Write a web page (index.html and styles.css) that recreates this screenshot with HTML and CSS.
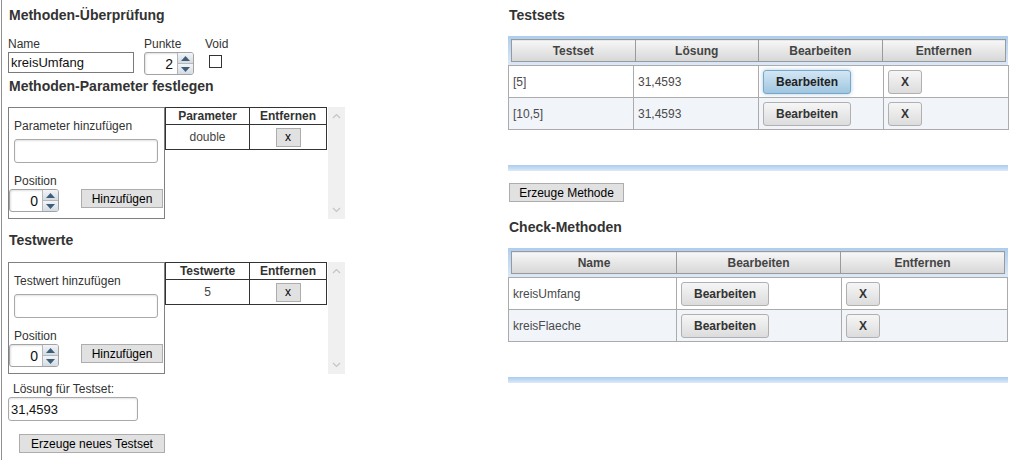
FILE: index.html
```html
<!DOCTYPE html>
<html lang="de">
<head>
<meta charset="utf-8">
<title>Methoden-Überprüfung</title>
<link rel="stylesheet" href="styles.css">
</head>
<body>
<div class="page">
  <div class="left">
    <h2 class="title">Methoden-Überprüfung</h2>
    <div class="meta">
      <div class="fld f-name">
        <label class="lbl">Name</label>
        <input class="txt name-in" type="text" value="kreisUmfang">
      </div>
      <div class="fld f-punkte">
        <label class="lbl">Punkte</label>
        <div class="spin"><span class="spin-val">2</span><span class="spin-btns"><span class="sb sb-up"><svg width="9" height="5" viewBox="0 0 9 5"><path d="M0 5 L4.5 0 L9 5Z" fill="#3d5d78"/></svg></span><span class="sb sb-dn"><svg width="9" height="5" viewBox="0 0 9 5"><path d="M0 0 L4.5 5 L9 0Z" fill="#3d5d78"/></svg></span></span></div>
      </div>
      <div class="fld f-void">
        <label class="lbl">Void</label>
        <span class="chk"></span>
      </div>
    </div>

    <h2 class="title t-sub">Methoden-Parameter festlegen</h2>
    <div class="editor">
      <div class="ebox">
        <div class="lbl elbl">Parameter hinzufügen</div>
        <input class="txt einput" type="text" value="">
        <div class="lbl elbl2">Position</div>
        <div class="erow">
          <div class="spin spin-sm"><span class="spin-val">0</span><span class="spin-btns"><span class="sb sb-up"><svg width="9" height="5" viewBox="0 0 9 5"><path d="M0 5 L4.5 0 L9 5Z" fill="#3d5d78"/></svg></span><span class="sb sb-dn"><svg width="9" height="5" viewBox="0 0 9 5"><path d="M0 0 L4.5 5 L9 0Z" fill="#3d5d78"/></svg></span></span></div>
          <button class="btn btn-add">Hinzufügen</button>
        </div>
      </div>
      <div class="etable">
        <table class="ptable">
          <tr><th class="c1">Parameter</th><th class="c2">Entfernen</th></tr>
          <tr><td>double</td><td><button class="btn btn-x">x</button></td></tr>
        </table>
        <div class="vscroll">
          <svg width="9" height="6" viewBox="0 0 9 6"><path d="M1 5 L4.5 1.5 L8 5" fill="none" stroke="#c4c4c4" stroke-width="1.2"/></svg>
          <svg width="9" height="6" viewBox="0 0 9 6"><path d="M1 1 L4.5 4.5 L8 1" fill="none" stroke="#c4c4c4" stroke-width="1.2"/></svg>
        </div>
      </div>
    </div>

    <h2 class="title t-sub2">Testwerte</h2>
    <div class="editor editor2">
      <div class="ebox">
        <div class="lbl elbl">Testwert hinzufügen</div>
        <input class="txt einput" type="text" value="">
        <div class="lbl elbl2">Position</div>
        <div class="erow">
          <div class="spin spin-sm"><span class="spin-val">0</span><span class="spin-btns"><span class="sb sb-up"><svg width="9" height="5" viewBox="0 0 9 5"><path d="M0 5 L4.5 0 L9 5Z" fill="#3d5d78"/></svg></span><span class="sb sb-dn"><svg width="9" height="5" viewBox="0 0 9 5"><path d="M0 0 L4.5 5 L9 0Z" fill="#3d5d78"/></svg></span></span></div>
          <button class="btn btn-add">Hinzufügen</button>
        </div>
      </div>
      <div class="etable">
        <table class="ptable">
          <tr><th class="c1">Testwerte</th><th class="c2">Entfernen</th></tr>
          <tr><td>5</td><td><button class="btn btn-x">x</button></td></tr>
        </table>
        <div class="vscroll">
          <svg width="9" height="6" viewBox="0 0 9 6"><path d="M1 5 L4.5 1.5 L8 5" fill="none" stroke="#c4c4c4" stroke-width="1.2"/></svg>
          <svg width="9" height="6" viewBox="0 0 9 6"><path d="M1 1 L4.5 4.5 L8 1" fill="none" stroke="#c4c4c4" stroke-width="1.2"/></svg>
        </div>
      </div>
    </div>

    <div class="lbl loes-lbl">Lösung für Testset:</div>
    <input class="txt loes-in" type="text" value="31,4593">
    <button class="btn btn-new">Erzeuge neues Testset</button>
  </div>

  <div class="right">
    <h2 class="title">Testsets</h2>
    <div class="dt">
      <div class="dt-head">
        <table class="hd">
          <tr><th class="w4">Testset</th><th class="w4">Lösung</th><th class="w4">Bearbeiten</th><th class="w4">Entfernen</th></tr>
        </table>
      </div>
      <div class="dt-body">
        <table class="bd">
          <tr class="odd"><td class="w4">[5]</td><td class="w4">31,4593</td><td class="w4"><button class="ubtn ubtn-b active">Bearbeiten</button></td><td class="w4"><button class="ubtn ubtn-x">X</button></td></tr>
          <tr class="even"><td>[10,5]</td><td>31,4593</td><td><button class="ubtn ubtn-b">Bearbeiten</button></td><td><button class="ubtn ubtn-x">X</button></td></tr>
        </table>
      </div>
      <div class="dt-foot"></div>
    </div>
    <button class="btn btn-gen">Erzeuge Methode</button>

    <h2 class="title t-check">Check-Methoden</h2>
    <div class="dt">
      <div class="dt-head">
        <table class="hd">
          <tr><th class="k1">Name</th><th class="k2">Bearbeiten</th><th>Entfernen</th></tr>
        </table>
      </div>
      <div class="dt-body">
        <table class="bd">
          <tr class="odd"><td class="k1b">kreisUmfang</td><td class="k2b"><button class="ubtn ubtn-b">Bearbeiten</button></td><td><button class="ubtn ubtn-x">X</button></td></tr>
          <tr class="even"><td>kreisFlaeche</td><td><button class="ubtn ubtn-b">Bearbeiten</button></td><td><button class="ubtn ubtn-x">X</button></td></tr>
        </table>
      </div>
      <div class="dt-foot"></div>
    </div>
  </div>
</div>
</body>
</html>
```
FILE: styles.css
```css
* { box-sizing: border-box; }
html, body { margin: 0; padding: 0; background: #fff; }
body {
  font-family: "Liberation Sans", Arial, sans-serif;
  font-size: 12px;
  color: #333;
}
.page { display: flex; height: 460px; }

.left {
  width: 507px;
  margin-left: 1px;
  border-left: 1px solid #8f8f8f;
  padding-left: 6px;
  display: flex;
  flex-direction: column;
  align-items: flex-start;
}
.right {
  width: 500px;
  display: flex;
  flex-direction: column;
  align-items: flex-start;
}

.title {
  margin: 7px 0 0 1px;
  font-size: 14px;
  line-height: 16px;
  font-weight: bold;
  color: #333;
}
.t-sub { margin-top: 3px; }
.t-sub2 { margin-top: 13px; }
.t-check { margin-top: 17px; }

.lbl { display: block; font-size: 12px; line-height: 14px; color: #333; }

.meta { display: flex; margin-top: 14px; height: 38px; }
.fld { display: flex; flex-direction: column; }
.fld .lbl { height: 15px; }
.f-punkte { margin-left: 10px; }
.f-void { margin-left: 10px; }
.f-void .lbl { margin-left: 1px; }

.txt {
  font-family: "Liberation Sans", Arial, sans-serif;
  font-size: 13px;
  color: #111;
  margin: 0;
  outline: none;
  background: #fff;
}
.name-in {
  width: 126px;
  height: 21px;
  border: 1px solid #7a7a7a;
  padding: 0 2px;
}
.chk {
  display: block;
  width: 13px;
  height: 13px;
  border: 1px solid #333;
  background: #fff;
  margin: 3px 0 0 5px;
}

.spin {
  display: flex;
  width: 50px;
  height: 23px;
  border: 1px solid #a3a3a3;
  border-radius: 3px;
  background: #fff;
  box-shadow: inset 1px 1px 2px rgba(0,0,0,0.12);
  overflow: hidden;
}
.spin-val {
  flex: 1;
  text-align: right;
  padding-right: 4px;
  font-size: 14px;
  line-height: 22px;
  color: #111;
}
.spin-btns {
  width: 16px;
  display: flex;
  flex-direction: column;
  border-left: 1px solid #b7b7b7;
}
.sb {
  flex: 1;
  display: flex;
  align-items: center;
  justify-content: center;
  background: linear-gradient(#f2f5f8, #d3dbe3);
}
.sb-dn { border-top: 1px solid #b7b7b7; }

.editor { display: flex; margin-top: 13px; height: 112px; }
.editor2 { margin-top: 14px; }
.ebox {
  width: 157px;
  height: 112px;
  border: 1px solid #808080;
  padding: 11px 0 0 5px;
}
.einput {
  display: block;
  width: 144px;
  height: 24px;
  margin-top: 6px;
  border: 1px solid #a9a9a9;
  border-radius: 3px;
  box-shadow: inset 0 1px 2px rgba(0,0,0,0.12);
}
.elbl2 { margin-top: 11px; }
.erow { display: flex; align-items: flex-start; margin-top: 1px; margin-left: -5px; }
.erow .btn-add { margin-left: 22px; }

.btn {
  font-family: "Liberation Sans", Arial, sans-serif;
  font-size: 12px;
  color: #000;
  background: #e1e1e1;
  border: 1px solid #adadad;
  padding: 0;
  margin: 0;
  line-height: 16px;
}
.btn-add { width: 82px; height: 19px; }
.btn-x { width: 25px; height: 19px; font-size: 12px; }

.etable { display: flex; width: 180px; height: 112px; }
.ptable {
  width: 163px;
  border-collapse: collapse;
  border: 1px solid #333;
  align-self: flex-start;
}
.ptable th {
  font-size: 12px;
  font-weight: bold;
  color: #333;
  height: 17px;
  line-height: 14px;
  padding: 0;
  border: 1px solid #333;
}
.ptable th.c1 { width: 84px; }
.ptable td {
  text-align: center;
  height: 25px;
  padding: 0;
  border: 1px solid #333;
  color: #444;
  vertical-align: middle;
}
.vscroll {
  width: 17px;
  margin-left: 1px;
  height: 112px;
  background: #f0f0f0;
  display: flex;
  flex-direction: column;
  justify-content: space-between;
  align-items: center;
  padding: 6px 0 6px;
}

.loes-lbl { margin: 8px 0 0 5px; }
.loes-in {
  display: block;
  width: 130px;
  height: 24px;
  margin-top: 1px;
  border: 1px solid #a9a9a9;
  border-radius: 3px;
  padding: 0 2px;
  box-shadow: inset 0 1px 2px rgba(0,0,0,0.12);
}
.btn-new { margin: 13px 0 0 11px; width: 146px; height: 19px; }

/* data tables */
.dt { width: 500px; margin-top: 13px; }
.dt-head {
  height: 29px;
  padding: 3px 3px 0 3px;
  background: linear-gradient(#aecdee, #dbe8f7);
}
.hd {
  width: 494px;
  border-collapse: collapse;
  table-layout: fixed;
}
.hd th {
  height: 22px;
  padding: 0;
  border: 1px solid #9a9a9a;
  background: linear-gradient(#f7f7f7, #d6d6d6);
  font-size: 12px;
  font-weight: bold;
  color: #444;
  text-align: center;
}
.hd th.w4 { width: 123.5px; }
.hd th.k1 { width: 165px; }
.hd th.k2 { width: 164px; }

.dt-body { height: 100px; }
.bd {
  width: 500px;
  border-collapse: collapse;
  table-layout: fixed;
}
.bd td {
  border: 1px solid #ababab;
  padding: 4px 4px 3px 4px;
  height: 32px;
  font-size: 12px;
  color: #4a4a4a;
  vertical-align: middle;
}
.bd td.w4 { width: 125px; }
.bd td.k1b { width: 168px; }
.bd td.k2b { width: 165px; }
.bd tr.odd { background: #fff; }
.bd tr.even { background: #f1f5fa; }

.ubtn {
  font-family: "Liberation Sans", Arial, sans-serif;
  font-size: 12px;
  font-weight: bold;
  color: #333;
  height: 24px;
  padding: 0;
  border: 1px solid #b0b0b0;
  border-radius: 3px;
  background: linear-gradient(#f6f6f6, #dcdcdc);
  display: block;
}
.ubtn-b { width: 88px; }
.ubtn-x { width: 34px; }
.ubtn.active {
  border-color: #7aa7c8;
  background: linear-gradient(#d3e6f4, #9fc6e0);
  box-shadow: 0 0 4px rgba(120,170,210,0.6);
  color: #222;
}

.dt-foot {
  height: 6px;
  background: linear-gradient(#a9ccf0, #dde9f8);
}
.btn-gen { margin: 12px 0 0 1px; width: 115px; height: 19px; }
```
